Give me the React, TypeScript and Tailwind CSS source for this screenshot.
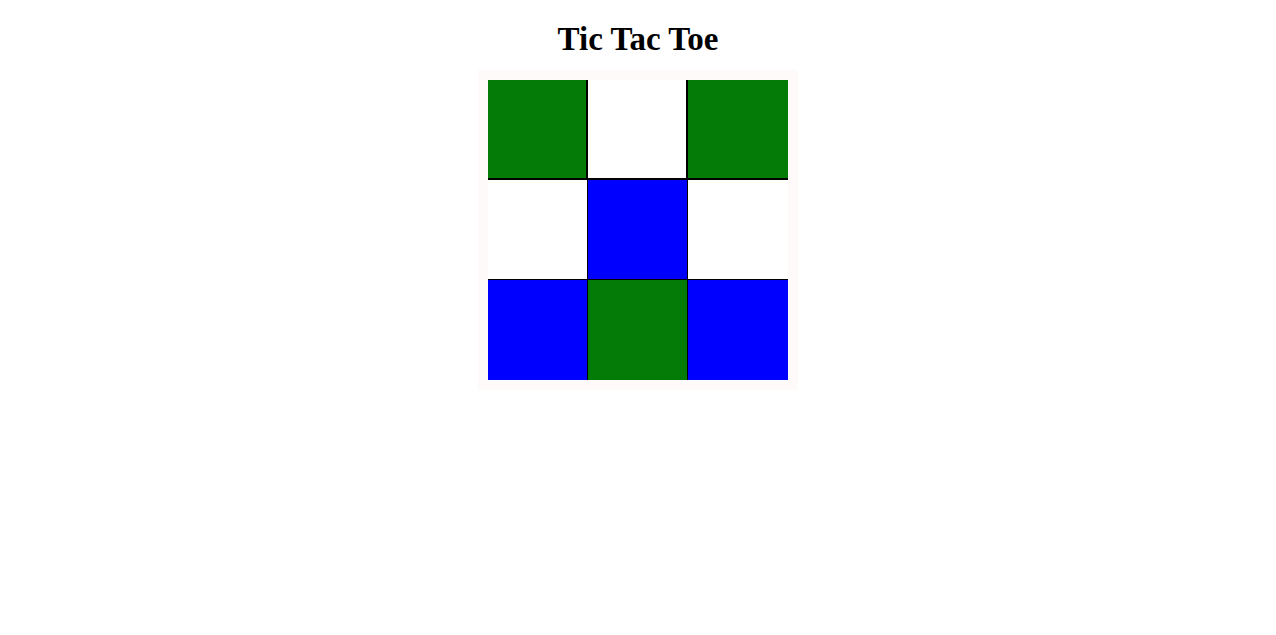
const cells = [
  ["green", "white", "green"],
  ["white", "blue", "white"],
  ["blue", "green", "blue"],
];

const colorClass: Record<string, string> = {
  green: "bg-[#047b07]",
  white: "bg-white",
  blue: "bg-[#0000ff]",
};

export default function App() {
  return (
    <div className="min-h-screen bg-white font-['Liberation_Serif',serif] text-black">
      <h1 className="pt-[21px] text-center text-[33px] font-bold leading-[37px]">Tic Tac Toe</h1>
      <div className="mx-auto mt-[12px] w-[320px] bg-[#fffafa] p-[10px]">
        <div className="grid grid-cols-3">
          {cells.map((row, r) =>
            row.map((c, i) => (
              <div
                key={`${r}-${i}`}
                className={[
                  "h-[100px] w-[100px] border-black",
                  colorClass[c],
                  r === 0 ? "border-b-2" : r === 1 ? "border-b" : "",
                  i < 2 ? (r === 0 ? "border-r-2" : "border-r") : "",
                ].join(" ")}
              />
            ))
          )}
        </div>
      </div>
    </div>
  );
}
